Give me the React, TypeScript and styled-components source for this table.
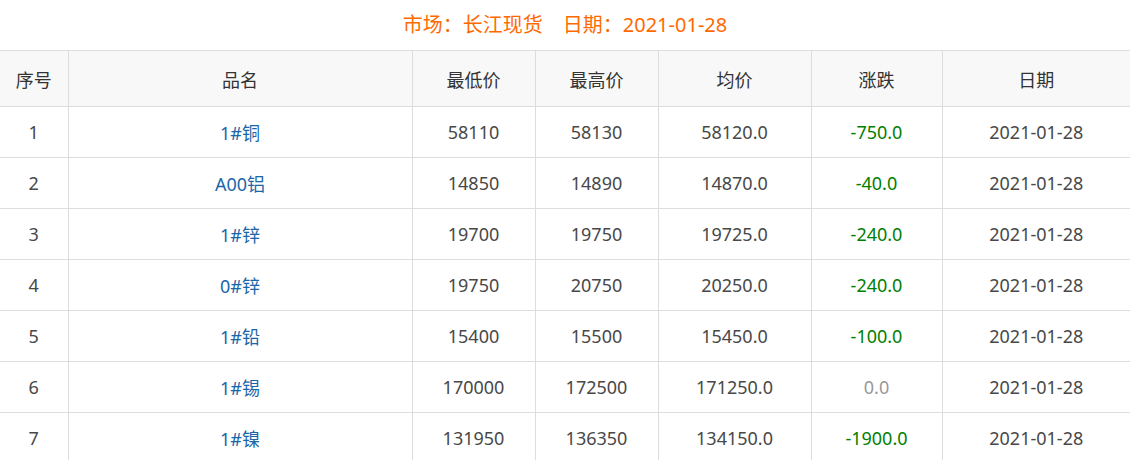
import React from "react";
import styled, { createGlobalStyle } from "styled-components";

const GlobalStyle = createGlobalStyle`
  html, body {
    margin: 0;
    padding: 0;
    background: #fff;
    font-family: "Noto Sans", "Noto Sans CJK SC", sans-serif;
  }
`;

const Page = styled.div`
  width: 1130px;
  overflow: hidden;
`;

const Title = styled.h2`
  margin: 0;
  height: 50px;
  line-height: 50px;
  text-align: center;
  font-size: 20px;
  font-weight: normal;
  color: #ff6a00;
`;

const Gap = styled.span`
  display: inline-block;
  width: 20px;
`;

const Table = styled.table`
  width: 1130px;
  border-collapse: collapse;
  table-layout: fixed;
  font-size: 18px;
  color: #484848;
`;

const Th = styled.th`
  height: 55px;
  padding: 0;
  background: #f8f8f8;
  font-weight: normal;
  color: #333;
  border: 1px solid #ddd;
  text-align: center;
  &:first-child {
    border-left: none;
  }
  &:last-child {
    border-right: none;
  }
`;

const Td = styled.td<{ $tone?: "name" | "down" | "flat" }>`
  height: 50px;
  padding: 0;
  border: 1px solid #ddd;
  text-align: center;
  color: ${(p) =>
    p.$tone === "name"
      ? "#1a66a8"
      : p.$tone === "down"
      ? "#008000"
      : p.$tone === "flat"
      ? "#999"
      : "#484848"};
  &:first-child {
    border-left: none;
  }
  &:last-child {
    border-right: none;
  }
`;

const columns = [
  { title: "序号", width: 68 },
  { title: "品名", width: 344 },
  { title: "最低价", width: 123 },
  { title: "最高价", width: 123 },
  { title: "均价", width: 153 },
  { title: "涨跌", width: 131 },
  { title: "日期", width: 188 },
];

const rows = [
  ["1", "1#铜", "58110", "58130", "58120.0", "-750.0"],
  ["2", "A00铝", "14850", "14890", "14870.0", "-40.0"],
  ["3", "1#锌", "19700", "19750", "19725.0", "-240.0"],
  ["4", "0#锌", "19750", "20750", "20250.0", "-240.0"],
  ["5", "1#铅", "15400", "15500", "15450.0", "-100.0"],
  ["6", "1#锡", "170000", "172500", "171250.0", "0.0"],
  ["7", "1#镍", "131950", "136350", "134150.0", "-1900.0"],
];

const date = "2021-01-28";

const App = () => (
  <Page>
    <GlobalStyle />
    <Title>
      市场：长江现货<Gap />日期：{date}
    </Title>
    <Table>
      <colgroup>
        {columns.map((c) => (
          <col key={c.title} style={{ width: c.width }} />
        ))}
      </colgroup>
      <thead>
        <tr>
          {columns.map((c) => (
            <Th key={c.title}>{c.title}</Th>
          ))}
        </tr>
      </thead>
      <tbody>
        {rows.map(([no, name, low, high, avg, change]) => (
          <tr key={no}>
            <Td>{no}</Td>
            <Td $tone="name">{name}</Td>
            <Td>{low}</Td>
            <Td>{high}</Td>
            <Td>{avg}</Td>
            <Td $tone={parseFloat(change) === 0 ? "flat" : "down"}>{change}</Td>
            <Td>{date}</Td>
          </tr>
        ))}
      </tbody>
    </Table>
  </Page>
);

export default App;
